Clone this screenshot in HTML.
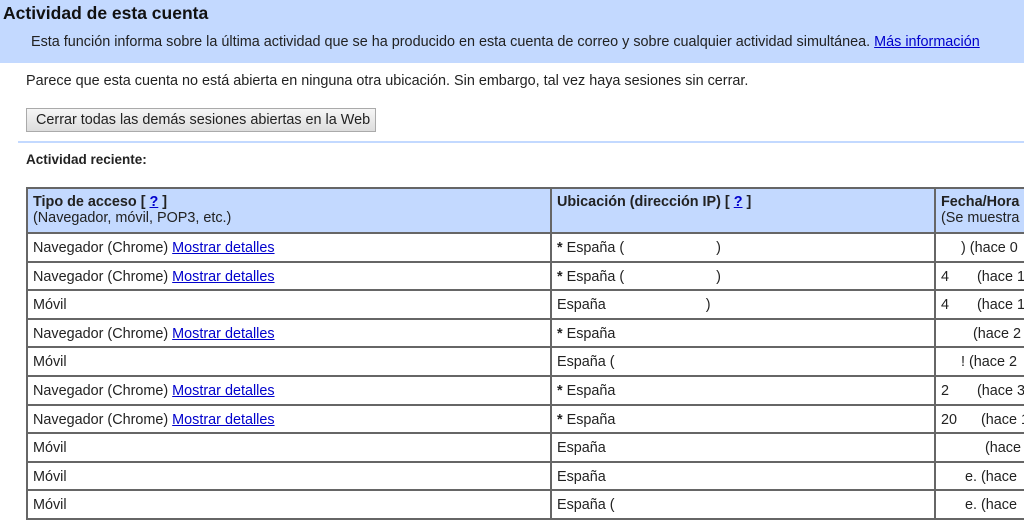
<!DOCTYPE html><html><head><meta charset="utf-8"><style>
body{margin:0;width:1024px;height:512px;overflow:hidden;background:#fff;font-family:"Liberation Sans",sans-serif;font-size:14.4px;color:#222}
.hd{background:#c3d9ff;height:63px;position:relative}
.t{position:absolute;left:3px;top:3px;font-weight:bold;font-size:17.5px;color:#111}
.d{position:absolute;left:31px;top:34px}
a{color:#00c;text-decoration:underline}
.p{position:absolute;left:26px;top:73px}
.btn{position:absolute;left:26px;top:108px;border:1px solid #aaa;background:linear-gradient(#f6f6f6,#ddd);box-sizing:border-box;width:350px;height:24px;padding:3px 0 0 9px}
.ln{position:absolute;left:18px;right:0;top:141px;height:2px;background:#c3d9ff}
.ar{position:absolute;left:26px;top:152px;font-weight:bold;font-size:13.5px}
table{position:absolute;left:26px;top:187px;border-collapse:collapse;width:1100px}
td{border:2px solid #666;padding:2px 5px 0;height:24.6px;vertical-align:top;white-space:nowrap;line-height:24px}
tr.h td{background:#c3d9ff;height:38px;padding-top:5px;padding-bottom:0;line-height:16px}
.c1{width:512px}.c2{width:372px}
</style></head><body>
<div class="hd"><div class="t">Actividad de esta cuenta</div><div class="d">Esta función informa sobre la última actividad que se ha producido en esta cuenta de correo y sobre cualquier actividad simultánea. <a>Más información</a></div></div>
<div class="p">Parece que esta cuenta no está abierta en ninguna otra ubicación. Sin embargo, tal vez haya sesiones sin cerrar.</div>
<div class="btn">Cerrar todas las demás sesiones abiertas en la Web</div>
<div class="ln"></div>
<div class="ar">Actividad reciente:</div>
<table>
<tr class="h"><td class="c1"><b>Tipo de acceso [ <a>?</a> ]</b><br>(Navegador, móvil, POP3, etc.)</td><td class="c2"><b>Ubicación (dirección IP) [ <a>?</a> ]</b></td><td><b>Fecha/Hora</b><br>(Se muestra</td></tr>
<tr><td>Navegador (Chrome) <a>Mostrar detalles</a></td><td><b>*</b> España (&nbsp;&nbsp;&nbsp;&nbsp;&nbsp;&nbsp;&nbsp;&nbsp;&nbsp;&nbsp;&nbsp;&nbsp;&nbsp;&nbsp;&nbsp;&nbsp;&nbsp;&nbsp;&nbsp;&nbsp;&nbsp;&nbsp;&nbsp;)</td><td>&nbsp;&nbsp;&nbsp;&nbsp;&nbsp;) (hace 0</td></tr>
<tr><td>Navegador (Chrome) <a>Mostrar detalles</a></td><td><b>*</b> España (&nbsp;&nbsp;&nbsp;&nbsp;&nbsp;&nbsp;&nbsp;&nbsp;&nbsp;&nbsp;&nbsp;&nbsp;&nbsp;&nbsp;&nbsp;&nbsp;&nbsp;&nbsp;&nbsp;&nbsp;&nbsp;&nbsp;&nbsp;)</td><td>4&nbsp;&nbsp;&nbsp;&nbsp;&nbsp;&nbsp; (hace 1</td></tr>
<tr><td>Móvil</td><td>España&nbsp;&nbsp;&nbsp;&nbsp;&nbsp;&nbsp;&nbsp;&nbsp;&nbsp;&nbsp;&nbsp;&nbsp;&nbsp;&nbsp;&nbsp;&nbsp;&nbsp;&nbsp;&nbsp;&nbsp;&nbsp;&nbsp;&nbsp;&nbsp;&nbsp;)</td><td>4&nbsp;&nbsp;&nbsp;&nbsp;&nbsp;&nbsp; (hace 1</td></tr>
<tr><td>Navegador (Chrome) <a>Mostrar detalles</a></td><td><b>*</b> España</td><td>&nbsp;&nbsp;&nbsp;&nbsp;&nbsp;&nbsp;&nbsp; (hace 2</td></tr>
<tr><td>Móvil</td><td>España (</td><td>&nbsp;&nbsp;&nbsp;&nbsp;&nbsp;! (hace 2</td></tr>
<tr><td>Navegador (Chrome) <a>Mostrar detalles</a></td><td><b>*</b> España</td><td>2&nbsp;&nbsp;&nbsp;&nbsp;&nbsp;&nbsp; (hace 3</td></tr>
<tr><td>Navegador (Chrome) <a>Mostrar detalles</a></td><td><b>*</b> España</td><td>20&nbsp;&nbsp;&nbsp;&nbsp;&nbsp;&nbsp;(hace 1</td></tr>
<tr><td>Móvil</td><td>España</td><td>&nbsp;&nbsp;&nbsp;&nbsp;&nbsp;&nbsp;&nbsp;&nbsp;&nbsp;&nbsp;&nbsp;(hace</td></tr>
<tr><td>Móvil</td><td>España</td><td>&nbsp;&nbsp;&nbsp;&nbsp;&nbsp;&nbsp;e. (hace</td></tr>
<tr><td>Móvil</td><td>España (</td><td>&nbsp;&nbsp;&nbsp;&nbsp;&nbsp;&nbsp;e. (hace</td></tr>
</table>
</body></html>
